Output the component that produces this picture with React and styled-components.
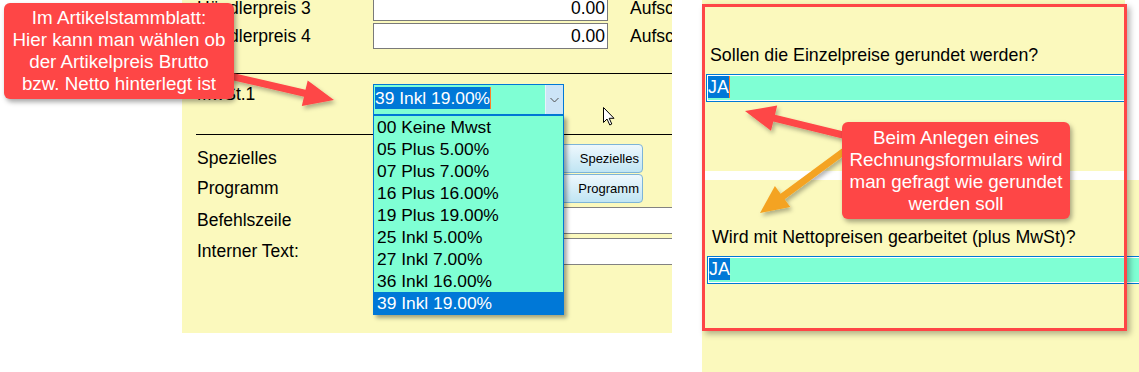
import styled, { createGlobalStyle } from 'styled-components';

const YELLOW = '#fbf9bd';
const AQUA = '#7fffd4';
const BLUE = '#0078d7';
const RED = '#fe4646';

const GlobalStyle = createGlobalStyle`
	*, *::before, *::after {
		box-sizing: border-box;
	}
	body {
		margin: 0;
		background: #fff;
		font-family: 'Liberation Sans', Arial, sans-serif;
		color: #000;
	}
`;

const Stage = styled.div`
	position: relative;
	display: flex;
	width: 1139px;
	height: 372px;
	overflow: hidden;
	background: #fff;
`;

const Gutter = styled.div`
	flex: none;
	width: ${(p) => p.$w}px;
`;

// linker Screenshot: Artikelstammblatt
const FormPanel = styled.div`
	position: relative;
	flex: none;
	width: 490px;
	height: 333px;
	padding-left: 15px;
	background: ${YELLOW};
	overflow: hidden;
	font-size: 17.5px;
`;

const Row = styled.div`
	display: flex;
	align-items: center;
	height: ${(p) => p.$h}px;
	margin-top: ${(p) => p.$mt || 0}px;
`;

const Label = styled.span`
	flex: none;
	width: 176px;
	white-space: nowrap;
	${(p) => p.$top && 'align-self: flex-start; line-height: 20px;'}
`;

const NumberField = styled.div`
	flex: none;
	display: flex;
	align-items: center;
	justify-content: flex-end;
	width: 235px;
	height: 100%;
	padding-right: 2px;
	background: #fff;
	border: 1px solid #7a7a7a;
`;

const Side = styled.span`
	margin-left: 22px;
	white-space: nowrap;
`;

const Divider = styled.div`
	height: 1px;
	margin: ${(p) => p.$mt}px 0 0 -1px;
	background: #000;
`;

const SelectBox = styled.div`
	position: relative;
	flex: none;
	display: flex;
	width: 191px;
	height: 100%;
	border: 1px solid ${BLUE};
	background: ${AQUA};
	font-size: 17.4px;
`;

const SelectText = styled.div`
	flex: 1;
	padding: 2px 1px;
`;

const Selected = styled.span`
	display: inline-block;
	height: 22px;
	line-height: 22px;
	background: ${BLUE};
	color: #fff;
	border-right: ${(p) => (p.$caret ? '1px solid #ff7f27' : '0')};
`;

const SelectButton = styled.div`
	flex: none;
	display: flex;
	align-items: center;
	justify-content: center;
	width: 18px;
	background: #cce4f7;
	border-left: 1px solid #e8f3fb;
`;

const DropList = styled.div`
	position: absolute;
	z-index: 5;
	top: calc(100% + 1px);
	left: -1px;
	width: 191px;
	border: 1px solid ${BLUE};
	background: ${AQUA};
	box-shadow: 3px 3px 4px rgba(0, 0, 0, 0.35);
`;

const Option = styled.div`
	height: 22px;
	line-height: 22px;
	padding-left: 3px;
	white-space: nowrap;
	background: ${(p) => (p.$active ? BLUE : 'transparent')};
	color: ${(p) => (p.$active ? '#fff' : '#000')};
`;

const ButtonSlot = styled.div`
	flex: none;
	display: flex;
	justify-content: flex-end;
	width: 270px;
`;

const ToolButton = styled.div`
	display: flex;
	align-items: center;
	justify-content: flex-end;
	width: 110px;
	height: 29px;
	padding-right: 3px;
	font-size: 13px;
	border: 1px solid #7db4d8;
	border-radius: 4px;
	background: linear-gradient(#eef8fd, #c0e5f3);
`;

const TextField = styled.div`
	flex: 1;
	height: 100%;
	margin-right: -4px;
	background: #fff;
	border: 1px solid #828282;
`;

const Cursor = styled.svg`
	position: absolute;
	left: 421px;
	top: 107px;
`;

// rechter Screenshot: Rechnungsformular
const RightColumn = styled.div`
	flex: none;
	display: flex;
	flex-direction: column;
	gap: 9px;
	width: 437px;
	font-size: 17.8px;
`;

const Shot = styled.div`
	width: ${(p) => p.$w}px;
	height: ${(p) => p.$h}px;
	padding: ${(p) => p.$pt}px 0 0 ${(p) => p.$pl}px;
	background: ${YELLOW};
	overflow: hidden;
`;

const Question = styled.div`
	margin-left: ${(p) => p.$indent}px;
	line-height: 20px;
	white-space: nowrap;
`;

const AnswerBar = styled.div`
	height: 28px;
	margin: 9px -3px 0 0;
	padding: 1px;
	border: 1px solid ${BLUE};
	box-shadow: inset 0 0 0 1px #fff;
	background: ${AQUA};
`;

const Frame = styled.div`
	position: absolute;
	left: 702px;
	top: 4px;
	width: 425px;
	height: 327px;
	border: 3px solid ${RED};
	box-shadow: 3px 3px 6px rgba(0, 0, 0, 0.3);
`;

const Arrows = styled.svg`
	position: absolute;
	left: 0;
	top: 0;
	pointer-events: none;
`;

const Callout = styled.div`
	position: absolute;
	left: ${(p) => p.$x}px;
	top: ${(p) => p.$y}px;
	width: ${(p) => p.$w}px;
	height: ${(p) => p.$h}px;
	padding-top: ${(p) => p.$pt}px;
	background: ${RED};
	border-radius: 6px;
	box-shadow: 2px 3px 5px rgba(0, 0, 0, 0.35);
	color: #fff;
	font-size: 18.8px;
	line-height: 22px;
	text-align: center;
	white-space: nowrap;
`;

const RATES = [
	'00 Keine Mwst',
	'05 Plus 5.00%',
	'07 Plus 7.00%',
	'16 Plus 16.00%',
	'19 Plus 19.00%',
	'25 Inkl 5.00%',
	'27 Inkl 7.00%',
	'36 Inkl 16.00%',
	'39 Inkl 19.00%',
];

export default function App() {
	return (
		<Stage>
			<GlobalStyle />
			<Gutter $w={182} />
			<FormPanel>
				<Row $h={26} $mt={-5}>
					<Label>Händlerpreis 3</Label>
					<NumberField>0.00</NumberField>
					<Side>Aufschlag %</Side>
				</Row>
				<Row $h={26} $mt={2}>
					<Label>Händlerpreis 4</Label>
					<NumberField>0.00</NumberField>
					<Side>Aufschlag %</Side>
				</Row>
				<Divider $mt={24} />
				<Row $h={31} $mt={10}>
					<Label $top>MwSt.1</Label>
					<SelectBox>
						<SelectText>
							<Selected $caret>39 Inkl 19.00%</Selected>
						</SelectText>
						<SelectButton>
							<svg width="9" height="6" viewBox="0 0 9 6">
								<polyline points="0.5,1 4.5,5 8.5,1" fill="none" stroke="#505050" strokeWidth="1" />
							</svg>
						</SelectButton>
						<DropList>
							{RATES.map((r, i) => (
								<Option key={r} $active={i === RATES.length - 1}>
									{r}
								</Option>
							))}
						</DropList>
					</SelectBox>
				</Row>
				<Divider $mt={19} />
				<Row $h={30} $mt={8}>
					<Label>Spezielles</Label>
					<ButtonSlot>
						<ToolButton>Spezielles</ToolButton>
					</ButtonSlot>
				</Row>
				<Row $h={30}>
					<Label>Programm</Label>
					<ButtonSlot>
						<ToolButton>Programm</ToolButton>
					</ButtonSlot>
				</Row>
				<Row $h={27} $mt={4}>
					<Label>Befehlszeile</Label>
					<TextField />
				</Row>
				<Row $h={27} $mt={4}>
					<Label>Interner Text:</Label>
					<TextField />
				</Row>
				<Cursor width="12" height="19" viewBox="0 0 12 19">
					<path d="M0.5 0.5 L0.5 15.5 L4 12 L6.8 18 L8.8 17 L6.2 11.3 L11 11.3 Z" fill="#fff" stroke="#000" strokeWidth="1" strokeLinejoin="round" />
				</Cursor>
			</FormPanel>
			<Gutter $w={30} />
			<RightColumn>
				<Shot $w={423} $h={171} $pt={45} $pl={4}>
					<Question $indent={4}>Sollen die Einzelpreise gerundet werden?</Question>
					<AnswerBar>
						<Selected $caret>JA</Selected>
					</AnswerBar>
				</Shot>
				<Shot $w={437} $h={192} $pt={47} $pl={5}>
					<Question $indent={5}>Wird mit Nettopreisen gearbeitet (plus MwSt)?</Question>
					<AnswerBar>
						<Selected>JA</Selected>
					</AnswerBar>
				</Shot>
			</RightColumn>
			<Frame />
			<Arrows width="1139" height="372" viewBox="0 0 1139 372">
				<defs>
					<filter id="shade" x="-20%" y="-20%" width="140%" height="140%">
						<feDropShadow dx="2" dy="3" stdDeviation="2" floodColor="#000" floodOpacity="0.3" />
					</filter>
				</defs>
				<g filter="url(#shade)">
					<polygon
						points="230.8,72.6 305.5,89.8 307.7,80.6 334,100 301.8,105.9 304,96.7 229.2,79.4"
						fill={RED}
					/>
					<polygon
						points="843.8,131.6 775,114.7 777.2,105.5 745,111 771,130.8 773.3,121.5 842.2,138.4"
						fill={RED}
					/>
					<line x1="843" y1="152" x2="782" y2="197" stroke="#f4a321" strokeWidth="7" strokeLinecap="round" />
					<polygon points="774.9,185.9 790.3,206.9 760,213" fill="#f4a321" />
				</g>
			</Arrows>
			<Callout $x={4} $y={3} $w={230} $h={96} $pt={4}>
				Im Artikelstammblatt:
				<br />
				Hier kann man wählen ob
				<br />
				der Artikelpreis Brutto
				<br />
				bzw. Netto hinterlegt ist
			</Callout>
			<Callout $x={842} $y={122} $w={228} $h={97} $pt={5}>
				Beim Anlegen eines
				<br />
				Rechnungsformulars wird
				<br />
				man gefragt wie gerundet
				<br />
				werden soll
			</Callout>
		</Stage>
	);
}
